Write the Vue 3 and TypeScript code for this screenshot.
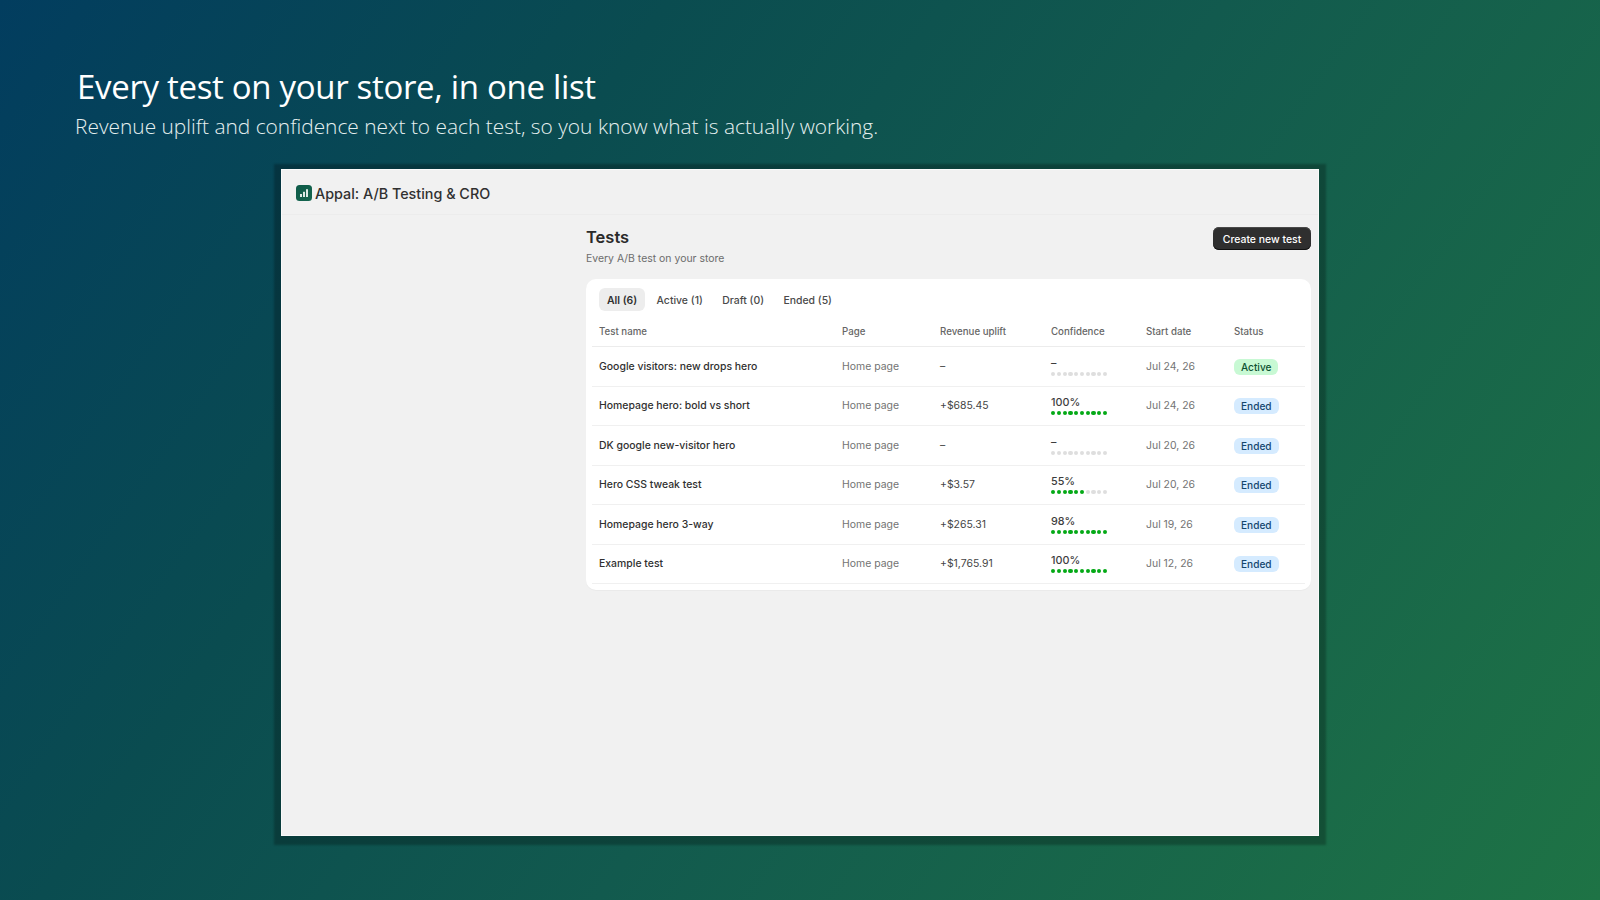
<template>
  <div class="page">
    <h1 class="headline">Every test on your store, in one list</h1>
    <p class="subline">Revenue uplift and confidence next to each test, so you know what is actually working.</p>

    <div class="screen">
      <header class="topbar">
        <span class="app-icon">
          <svg width="10" height="10" viewBox="0 0 10 10" fill="#dcebe5">
            <rect x="1" y="6" width="2" height="3" />
            <rect x="4" y="3.8" width="2" height="5.2" />
            <rect x="7" y="1.2" width="2" height="7.8" />
          </svg>
        </span>
        <span class="app-name">Appal: A/B Testing &amp; CRO</span>
      </header>

      <main class="content">
        <div class="page-head">
          <div>
            <h2 class="page-title">Tests</h2>
            <p class="page-sub">Every A/B test on your store</p>
          </div>
          <button class="create-btn" type="button">Create new test</button>
        </div>

        <section class="card">
          <nav class="tabs">
            <span v-for="(tab, i) in tabs" :key="tab" class="tab" :class="{ selected: i === 0 }">{{ tab }}</span>
          </nav>

          <div class="grid-row head-row">
            <span>Test name</span>
            <span>Page</span>
            <span>Revenue uplift</span>
            <span>Confidence</span>
            <span>Start date</span>
            <span>Status</span>
          </div>

          <div v-for="t in tests" :key="t.name" class="grid-row test-row">
            <span class="test-name">{{ t.name }}</span>
            <span class="muted">Home page</span>
            <span class="uplift">{{ t.uplift }}</span>
            <div class="confidence">
              <span class="conf-value">{{ t.confidence === null ? '–' : t.confidence + '%' }}</span>
              <div class="dots">
                <i v-for="n in 10" :key="n" class="dot" :class="{ on: n <= litDots(t.confidence) }" />
              </div>
            </div>
            <span class="muted">{{ t.date }}</span>
            <span class="badge-cell"><span class="badge" :class="t.status.toLowerCase()">{{ t.status }}</span></span>
          </div>
        </section>
      </main>
    </div>
  </div>
</template>

<script setup lang="ts">
interface TestRow {
  name: string
  uplift: string
  confidence: number | null
  date: string
  status: 'Active' | 'Ended'
}

const tabs = ['All (6)', 'Active (1)', 'Draft (0)', 'Ended (5)']

const tests: TestRow[] = [
  { name: 'Google visitors: new drops hero', uplift: '–', confidence: null, date: 'Jul 24, 26', status: 'Active' },
  { name: 'Homepage hero: bold vs short', uplift: '+$685.45', confidence: 100, date: 'Jul 24, 26', status: 'Ended' },
  { name: 'DK google new-visitor hero', uplift: '–', confidence: null, date: 'Jul 20, 26', status: 'Ended' },
  { name: 'Hero CSS tweak test', uplift: '+$3.57', confidence: 55, date: 'Jul 20, 26', status: 'Ended' },
  { name: 'Homepage hero 3-way', uplift: '+$265.31', confidence: 98, date: 'Jul 19, 26', status: 'Ended' },
  { name: 'Example test', uplift: '+$1,765.91', confidence: 100, date: 'Jul 12, 26', status: 'Ended' },
]

function litDots(confidence: number | null) {
  return confidence === null ? 0 : Math.round(confidence / 10)
}
</script>

<style>
html,
body {
  margin: 0;
  background: #0d5350;
}
</style>

<style scoped>
.page {
  box-sizing: border-box;
  width: 1600px;
  height: 900px;
  overflow: hidden;
  padding-top: 64px;
  background: linear-gradient(125deg, #023d5f 0%, #0a4c50 30%, #125a4e 55%, #1e7345 100%);
  font-family: Inter, 'Liberation Sans', sans-serif;
}

.headline {
  margin: 0 0 0 77px;
  font-family: 'Open Sans', sans-serif;
  font-size: 33px;
  line-height: 46px;
  font-weight: 500;
  letter-spacing: -0.32px;
  color: #fff;
}

.subline {
  margin: 2px 0 0 75px;
  font-family: 'Open Sans', sans-serif;
  font-size: 20.9px;
  line-height: 29px;
  font-weight: 300;
  color: #e6f0f0;
}

.screen {
  box-sizing: border-box;
  width: 1038px;
  height: 667px;
  margin: 28px 0 0 281px;
  display: flex;
  flex-direction: column;
  background: #f1f1f1;
  border: 1px solid #fafafa;
  box-shadow: 0 2px 2px 7px rgba(0, 0, 0, 0.25);
}

.topbar {
  flex: none;
  box-sizing: border-box;
  height: 45px;
  display: flex;
  align-items: center;
  gap: 3px;
  padding: 2px 0 0 14px;
  border-bottom: 1px solid #ececec;
}

.app-icon {
  width: 16px;
  height: 16px;
  border-radius: 3.5px;
  display: flex;
  align-items: center;
  justify-content: center;
  background: linear-gradient(135deg, #0e5a48, #15664f);
}

.app-name {
  font-size: 14.35px;
  font-weight: 500;
  color: #303030;
}

.content {
  flex: 1;
  padding: 0 7px 0 304px;
}

.page-head {
  display: flex;
  justify-content: space-between;
  align-items: flex-start;
  height: 64px;
  padding-top: 12px;
  box-sizing: border-box;
}

.page-title {
  margin: -1px 0 0;
  font-size: 16.5px;
  line-height: 22px;
  font-weight: 600;
  color: #2a2a2a;
}

.page-sub {
  margin: 3px 0 0;
  font-size: 10.45px;
  line-height: 15px;
  color: #6d6d6d;
}

.create-btn {
  width: 98px;
  height: 23px;
  padding: 1px 0 0;
  border: none;
  border-radius: 6px;
  background: #2f2f2f;
  box-shadow: inset 0 -1px 0 #111, inset 0 1px 0 #4a4a4a;
  color: #fff;
  font-family: inherit;
  font-size: 10.45px;
  font-weight: 500;
}

.card {
  padding: 9px 6px 6px;
  background: #fff;
  border-radius: 10px;
  box-shadow: 0 1px 1px rgba(0, 0, 0, 0.03);
}

.tabs {
  display: flex;
  gap: 3.4px;
  padding-left: 7px;
  height: 23px;
}

.tab {
  display: flex;
  align-items: center;
  padding: 1px 8px 0;
  border-radius: 6px;
  font-size: 10.45px;
  font-weight: 500;
  color: #4a4a4a;
}

.tab.selected {
  background: #ededed;
  color: #303030;
  font-weight: 600;
}

.grid-row {
  display: grid;
  grid-template-columns: 243px 98px 111px 95px 88px 1fr;
  align-items: center;
  padding-left: 7px;
  font-size: 10.45px;
}

.head-row {
  box-sizing: border-box;
  height: 36px;
  padding-top: 6px;
  border-bottom: 1px solid #ececec;
  font-size: 9.7px;
  font-weight: 500;
  color: #666;
}

.test-row {
  box-sizing: border-box;
  height: 39.5px;
  border-bottom: 1px solid #f0f0f0;
}

.test-name {
  font-weight: 550;
  color: #303030;
}

.muted {
  color: #737373;
}

.uplift {
  color: #454545;
}

.confidence {
  display: flex;
  flex-direction: column;
  gap: 2px;
}

.conf-value {
  font-size: 10.8px;
  line-height: 13px;
  font-weight: 500;
  color: #3d3d3d;
}

.dots {
  display: flex;
  gap: 1.6px;
}

.dot {
  width: 4.2px;
  height: 4.2px;
  border-radius: 50%;
  background: #dedede;
}

.dot.on {
  background: #04a916;
}

.badge-cell {
  display: flex;
  padding-top: 1px;
}

.badge {
  padding: 0 7px;
  height: 16px;
  line-height: 16px;
  border-radius: 6px;
  font-size: 10.1px;
  font-weight: 550;
}

.badge.active {
  background: #c8f9d4;
  color: #0c5132;
}

.badge.ended {
  background: #d5ebff;
  color: #13466e;
}
</style>
